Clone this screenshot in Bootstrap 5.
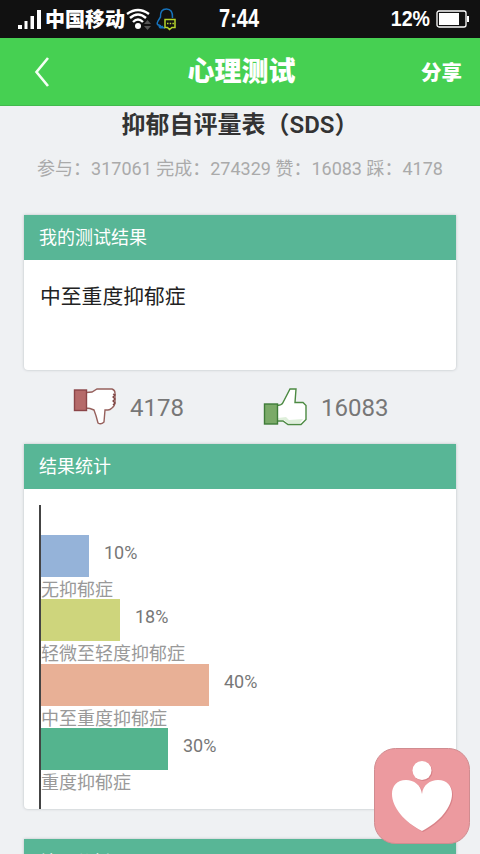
<!DOCTYPE html>
<html lang="zh-CN">
<head>
<meta charset="utf-8">
<meta name="viewport" content="width=device-width, initial-scale=1">
<title>心理测试</title>
<link href="https://cdn.jsdelivr.net/npm/bootstrap@5.3.0/dist/css/bootstrap.min.css" rel="stylesheet">
<style>
html,body{height:100%}
body{font-family:Roboto,"Noto Sans CJK SC",sans-serif;background:#eff1f3}
.screen{width:480px;height:854px}
.statusbar{height:38px;background:#111;color:#fff;display:grid;grid-template-columns:1fr auto 1fr;padding:0 11px 0 18px}
.carrier{font:900 20px/36px "Noto Sans CJK SC",sans-serif;margin-left:3px}
.clock{font:700 25px/37px "Liberation Sans",sans-serif;transform:scaleX(.8);margin:0 -3px 0 -11px}
.batt{font:700 22px/36px "Liberation Sans",sans-serif;transform:scaleX(.89);transform-origin:right;margin-right:6px}
.appbar{height:68px;background:#46d052;color:#fff;border-bottom:1px solid #42b94d;font-family:"Noto Sans CJK SC",sans-serif}
.apptitle{font-weight:900;font-size:27px;line-height:63px;padding-left:3px}
.share{font-weight:900;font-size:20.5px;line-height:66px;padding-right:18px}
.side{width:140px}
.quiz-title{font-size:24px;line-height:38px;height:36px;color:#333;font-weight:600}
.stats{font-size:18px;line-height:24px;color:#aaa;margin-top:15px;white-space:pre}
.panel{margin:0 24px;background:#fff;border-radius:0 0 4px 4px;box-shadow:0 0 3px #b9bec1}
.panel-head{height:45px;line-height:46px;background:#58b696;color:#fff;font-size:18px;padding-left:15px;font-weight:400}
.result-panel{margin-top:34px}
.next-panel{margin-top:30px}
.next-panel .panel-head{line-height:47px}
.result{height:110px;padding:19px 16px;font-size:20.8px;line-height:36px;color:#222}
.votes{height:74px;color:#777;font-size:24px}
.votes span{margin-left:13px;padding-top:1px}
.vote-down{margin-left:73px;width:190px}
.vote-up span{margin-left:14px}
.chart{margin-left:15px;height:304px;border-left:2px solid #444;padding-top:29.5px}
.bar{height:42px}
.pct{font-size:18px;line-height:36px;margin-left:15px;color:#777}
.bar-label{height:22.5px;line-height:26px;font-size:18px;color:#999;white-space:nowrap}
.heart{right:10px;top:748px}
</style>
<script src="https://cdn.jsdelivr.net/npm/bootstrap@5.3.0/dist/js/bootstrap.bundle.min.js"></script>
</head>
<body class="overflow-hidden m-0">
<div class="screen position-relative overflow-hidden">
  <div class="statusbar">
    <div class="d-flex align-items-center">
      <svg width="24" height="22" viewBox="0 0 24 22" fill="#fff"><path d="M0 17h4v4H0zM6.500 13h3v8h-3zM12.500 8H16v13h-3.500zM19 2h4v19h-4z"/></svg>
      <span class="carrier text-nowrap">中国移动</span>
      <svg width="27" height="24" viewBox="0 0 27 24" fill="none" stroke="#fff" stroke-width="2.400"><path d="M2 7Q13 -1 24 7M5 11Q13 4 21 11M8 15Q13 10 18 15"/><circle cx="13" cy="19" r="3" fill="#fff" stroke="none"/><path d="M19 17l3.500-4 3.500 4zM19 19l3.500 4 3.500-4z" fill="#555" stroke="none"/></svg>
      <svg class="ms-1" width="22" height="24" viewBox="0 0 22 24" fill="none"><path d="M7 19Q3 23 3 18Q0 18 2 14L4.500 10Q4 2 10.500 2Q17 2 16.500 11M4 18Q5 21 9 21" stroke="#1673bd" stroke-width="1.500"/><path d="M9 12.500h10v8h-3l-2.500 2-2-2H9z" stroke="#b6d52c" stroke-width="1.500"/><path d="M11 16.500h7" stroke="#b6d52c" stroke-width="1.500" stroke-dasharray="1.500 1.200"/></svg>
    </div>
    <div class="clock">7:44</div>
    <div class="d-flex align-items-center justify-content-end">
      <span class="batt">12%</span>
      <svg width="33" height="18" viewBox="0 0 33 18"><rect x="1" y="1" width="29" height="16" rx="2" fill="none" stroke="#fff" stroke-width="1.300"/><path d="M3 3h20v12H3zM31 6h2v6h-2z" fill="#fff"/></svg>
    </div>
  </div>
  <header class="appbar d-flex justify-content-between">
    <div class="side d-flex align-items-center"><svg class="ms-4" width="36" height="34" viewBox="0 0 36 34"><path d="M24 3L12.500 17 24 31" fill="none" stroke="#f4fff4" stroke-width="2.600"/></svg></div>
    <div class="apptitle">心理测试</div>
    <div class="side share text-end">分享</div>
  </header>
  <main>
    <h1 class="quiz-title text-center mb-0">抑郁自评量表（SDS）</h1>
    <div class="stats text-center">参与：317061 完成：274329 赞：16083 踩：4178</div>
    <section class="panel result-panel">
      <div class="panel-head">我的测试结果</div>
      <div class="result">中至重度抑郁症</div>
    </section>
    <div class="votes d-flex align-items-center">
      <div class="vote-down d-flex align-items-center">
        <svg width="44" height="40" viewBox="0 0 44 40"><path d="M13 5.500L19 5l5-3h15q3 1 3 4v9q0 4-3 6-2 2-4 2h-3l-1 12q-3 3-6 1-2-8-4-13-4-2-8-2z" fill="#fff" stroke="#96605c" stroke-width="1.400"/><path d="M40 7l2 1-2 2 2 2-2 2 2 2-2 2" fill="none" stroke="#7d4442" stroke-width="1.300"/><rect x="1.500" y="3" width="12" height="20.500" fill="#b56a69" stroke="#8b4547" stroke-width="1.400"/></svg>
        <span>4178</span>
      </div>
      <div class="vote-up d-flex align-items-center">
        <svg width="44" height="40" viewBox="0 0 44 40"><path d="M13 18.500q6 0 7-3L27 2h6l-1 13.500h8l3 3v14l-5 5H25l-5-3.500h-7z" fill="#fff" stroke="#4c8a42" stroke-width="1.400"/><path d="M15 31l8-1 3 3 14-1-3 4H25l-4-3h-6z" fill="#deefda"/><rect x="1.500" y="17" width="13" height="20" fill="#7baa68" stroke="#3f7c38" stroke-width="1.400"/></svg>
        <span>16083</span>
      </div>
    </div>
    <section class="panel">
      <div class="panel-head">结果统计</div>
      <div class="pt-3"><div class="chart">
        <div class="d-flex"><div class="bar" style="width:48px;background:#95b3d9"></div><span class="pct">10%</span></div><div class="bar-label">无抑郁症</div>
        <div class="d-flex"><div class="bar" style="width:79px;background:#ced57c"></div><span class="pct">18%</span></div><div class="bar-label">轻微至轻度抑郁症</div>
        <div class="d-flex"><div class="bar" style="width:168px;background:#e8b096"></div><span class="pct">40%</span></div><div class="bar-label">中至重度抑郁症</div>
        <div class="d-flex"><div class="bar" style="width:127px;background:#54b48e"></div><span class="pct">30%</span></div><div class="bar-label">重度抑郁症</div>
      </div></div>
    </section>
    <section class="panel next-panel"><div class="panel-head">结果分析</div></section>
  </main>
  <svg class="heart position-absolute" width="96" height="96" viewBox="0 0 96 96"><rect x=".5" y=".5" width="95" height="95" rx="21" fill="#ec9a9f" stroke="#d08c90"/><g fill="#d88288" transform="translate(1 1)"><circle cx="48" cy="22.500" r="9.500"/><path d="M48 46C47 37 40 32 32 32 23 32 18 38 18 46 18 59 30 74 48 83 66 74 78 59 78 46 78 38 73 32 64 32 56 32 49 37 48 46z"/></g><g fill="#fff"><circle cx="48" cy="22.500" r="9.500"/><path d="M48 46C47 37 40 32 32 32 23 32 18 38 18 46 18 59 30 74 48 83 66 74 78 59 78 46 78 38 73 32 64 32 56 32 49 37 48 46z"/></g></svg>
</div>
</body>
</html>
